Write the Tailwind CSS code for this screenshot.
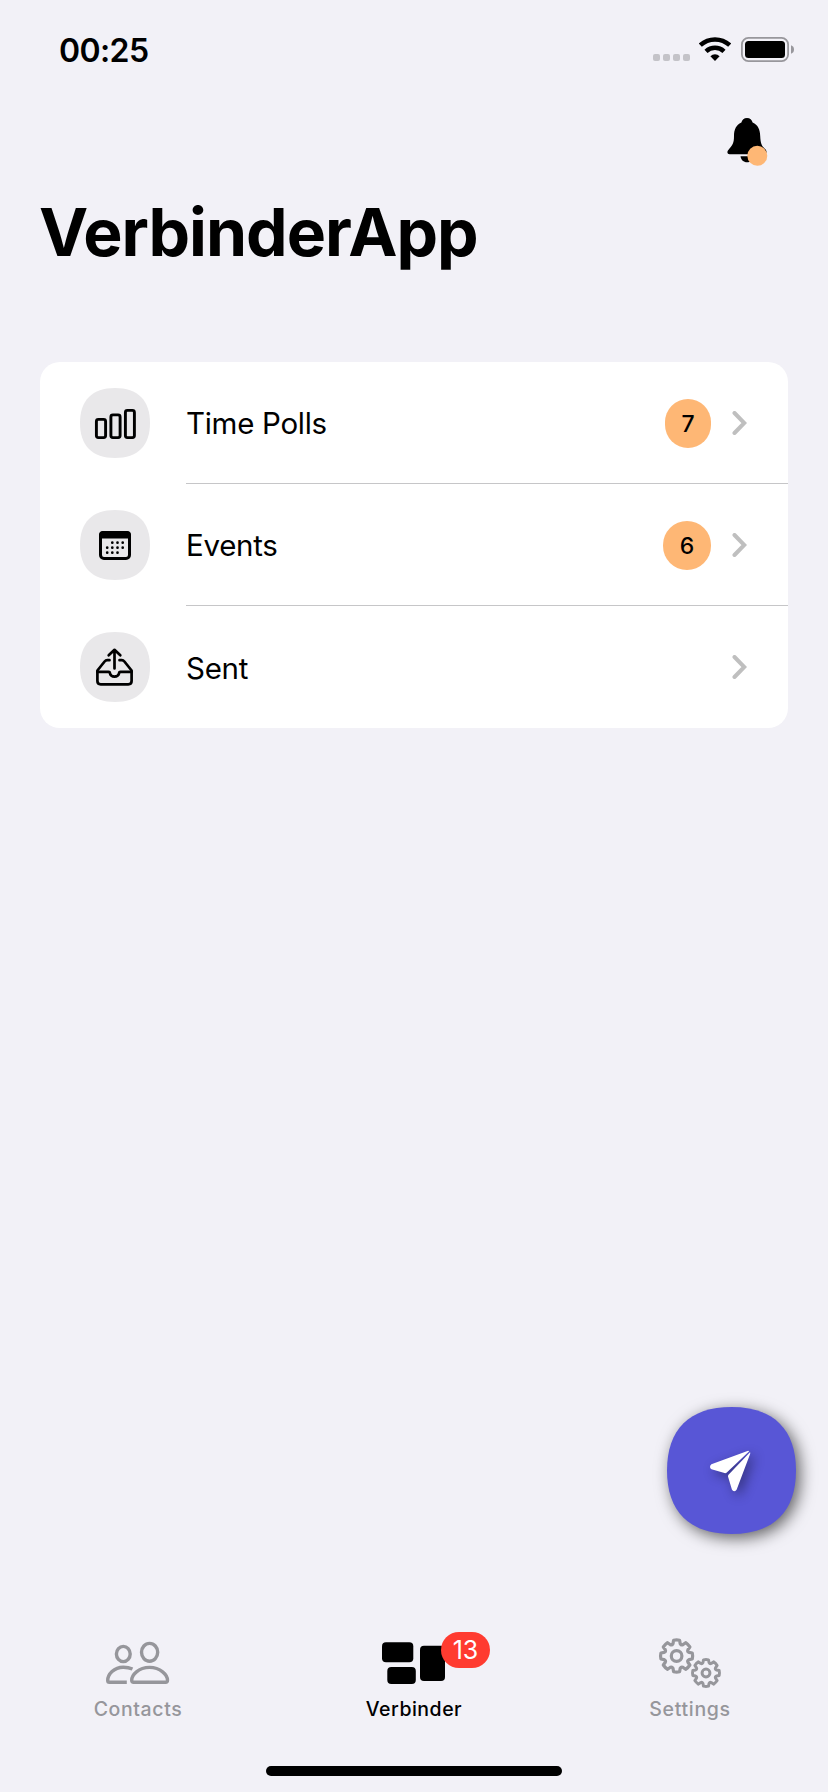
<!DOCTYPE html>
<html lang="en">
  <head>
    <meta charset="UTF-8" />
    <meta name="viewport" content="width=device-width, initial-scale=1.0" />
    <title>VerbinderApp</title>
    <script src="https://cdn.jsdelivr.net/npm/@tailwindcss/browser@4"></script>
    <style>
      body {
        font-family: "Inter", sans-serif;
      }
    </style>
  </head>
  <body class="bg-[#f2f1f7] text-black">
    <!-- Shared shapes -->
    <svg class="hidden">
      <symbol id="squircle" viewBox="0 0 100 100" preserveAspectRatio="none">
        <path d="M0 50C0 17.500 17.500 0 50 0S100 17.500 100 50 82.500 100 50 100 0 82.500 0 50Z" fill="currentColor" />
      </symbol>
      <symbol id="chevron" viewBox="0 0 14 24">
        <path d="M2 2l9.8 10L2 22" fill="none" stroke="#bfbfbf" stroke-width="4" stroke-linecap="round" stroke-linejoin="miter" />
      </symbol>
      <path
        id="gear"
        d="M-3-15.7Q0-16.4 3-15.7L3.6-12.4Q4.6-10.6 6.2-11.3L9-13.3Q11.6-11.6 13.3-9L11.3-6.2Q10.6-4.6 12.4-3.6L15.7-3Q16.4 0 15.7 3L12.4 3.6Q10.6 4.6 11.3 6.2L13.3 9Q11.6 11.6 9 13.3L6.2 11.3Q4.6 10.6 3.6 12.4L3 15.7Q0 16.4-3 15.7L-3.6 12.4Q-4.6 10.6-6.2 11.3L-9 13.3Q-11.6 11.6-13.3 9L-11.3 6.2Q-10.6 4.6-12.4 3.6L-15.7 3Q-16.4 0-15.7-3L-12.4-3.6Q-10.6-4.6-11.3-6.2L-13.3-9Q-11.6-11.6-9-13.3L-6.2-11.3Q-4.6-10.6-3.6-12.4Z"
      />
    </svg>

    <div class="relative flex h-[1792px] w-[828px] flex-col overflow-hidden">
      <!-- Status bar -->
      <header class="flex h-[98px] items-center justify-between pr-[34px] pl-[59px]">
        <span class="mt-[3px] text-[32px] leading-none font-semibold tracking-[-0.6px]">00:25</span>
        <div class="flex items-center">
          <div class="mt-[17px] mr-[9px] flex gap-[3px]">
            <i class="size-[7px] rounded-[2px] bg-[#c4c3c8]"></i>
            <i class="size-[7px] rounded-[2px] bg-[#c4c3c8]"></i>
            <i class="size-[7px] rounded-[2px] bg-[#c4c3c8]"></i>
            <i class="size-[7px] rounded-[2px] bg-[#c4c3c8]"></i>
          </div>
          <svg class="mr-[10px] h-[24px] w-[32px]" viewBox="0 0 32 24" fill="none" stroke="#000" stroke-width="4.5">
            <path d="M1.3 8.2A21.6 21.6 0 0 1 30.7 8.2" />
            <path d="M7 14.35A13.2 13.2 0 0 1 25 14.35" />
            <path d="M16 24L11.4 19.2A6.7 6.7 0 0 1 20.6 19.2Z" fill="#000" stroke="none" />
          </svg>
          <svg class="h-[25px] w-[53px]" viewBox="0 0 53 25">
            <rect x=".9" y=".9" width="46.2" height="23.2" rx="6.5" fill="none" stroke="#98979c" stroke-width="1.8" />
            <rect x="4" y="4" width="40" height="17" rx="3.5" />
            <path d="M50 8.3Q53 9.3 53 12.5T50 16.7Z" fill="#98979c" />
          </svg>
        </div>
      </header>

      <!-- Notifications -->
      <div class="flex h-[86px] justify-end pt-[20px] pr-[60px]">
        <svg class="h-[49px] w-[41px]" viewBox="0 0 41 49">
          <path d="M20 0C17 0 15 2 14.4 4.6 9 7 7 12 7 18C7 25 5.600 27 2.500 30.400Q.4 32.500.4 34.400Q.4 36.200 2.600 36.200H37Q39.600 36.200 39.600 34Q39.600 32 37.300 30.200C34.500 27.500 33.500 25 33.200 18C33 11.500 31 7 25.600 4.600 25 2 23 0 20 0Z" />
          <path d="M13.500 38.300H27C27 42 23.500 44.300 20 44.300S14 42 13.500 38.300Z" />
          <circle cx="30.300" cy="37.800" r="10" fill="#feb775" />
        </svg>
      </div>

      <h1 class="mb-[88px] h-[90px] pl-[39px] text-[66px] leading-[96px] font-bold tracking-[-1px]">VerbinderApp</h1>

      <!-- Menu -->
      <ul class="mx-10 rounded-[20px] bg-white">
        <li class="flex h-[122px] items-center pl-10">
          <div class="relative flex size-[70px] items-center justify-center">
            <svg class="absolute inset-0 size-full text-[#e9e8ea]"><use href="#squircle" /></svg>
            <svg class="relative size-[44px]" viewBox="0 0 44 44" fill="none" stroke="#000" stroke-width="2.900">
              <rect x="3.400" y="18.400" width="9.200" height="18.200" rx="2" />
              <rect x="17.900" y="13.900" width="9.200" height="22.700" rx="2" />
              <rect x="32.400" y="9.400" width="9" height="27.200" rx="2" />
            </svg>
          </div>
          <div class="ml-9 flex h-full grow items-center border-b border-[#c6c6c8] pr-[41px]">
            <span class="grow pt-[2px] text-[29.5px] tracking-[-0.3px]">Time Polls</span>
            <span class="mt-[2px] mr-[21px] flex h-[49px] w-[46px] items-center justify-center rounded-full bg-[#feb775] pt-px text-[23px] font-medium">7</span>
            <svg class="h-[24px] w-[15px]"><use href="#chevron" /></svg>
          </div>
        </li>
        <li class="flex h-[122px] items-center pl-10">
          <div class="relative flex size-[70px] items-center justify-center">
            <svg class="absolute inset-0 size-full text-[#e9e8ea]"><use href="#squircle" /></svg>
            <svg class="relative size-[44px]" viewBox="0 0 44 44">
              <rect x="7.500" y="9.500" width="29" height="26" rx="3.500" fill="none" stroke="#000" stroke-width="3" />
              <path d="M6 15.500V12Q6 8 10 8H34Q38 8 38 12V15.500Z" />
              <path
                d="M19.300 19.700h.01M24.500 19.700h.01M29.700 19.700h.01M14.200 24.700h.01M19.300 24.700h.01M24.500 24.700h.01M29.700 24.700h.01M14.200 29.700h.01M19.300 29.700h.01M24.500 29.700h.01"
                stroke="#000"
                stroke-width="2.700"
                stroke-linecap="round"
              />
            </svg>
          </div>
          <div class="ml-9 flex h-full grow items-center border-b border-[#c6c6c8] pr-[41px]">
            <span class="grow pt-[2px] text-[29.5px] tracking-[-0.3px]">Events</span>
            <span class="mt-[2px] mr-[21px] flex h-[49px] w-[48px] items-center justify-center rounded-full bg-[#feb775] pt-px text-[23px] font-medium">6</span>
            <svg class="h-[24px] w-[15px]"><use href="#chevron" /></svg>
          </div>
        </li>
        <li class="flex h-[122px] items-center pl-10">
          <div class="relative flex size-[70px] items-center justify-center">
            <svg class="absolute inset-0 size-full text-[#e9e8ea]"><use href="#squircle" /></svg>
            <svg
              class="relative size-[44px]"
              viewBox="0 0 44 44"
              fill="none"
              stroke="#000"
              stroke-width="2.700"
              stroke-linecap="round"
              stroke-linejoin="round"
            >
              <path d="M21.500 23.500V5M15.700 10.300L21.500 4.800 27.300 10.300" />
              <path d="M16.500 15.200H14.200Q12.700 15.200 11.600 16.500L4.400 25.500V36Q4.400 39.300 7.700 39.300H35.300Q38.600 39.300 38.600 36V25.500L31.400 16.500Q30.300 15.200 28.800 15.200H26.500" />
              <path d="M4.400 26.800H15.500Q16.900 26.800 16.900 28.300Q17.700 31.700 21.500 31.700T26.100 28.300Q26.100 26.800 27.500 26.800H38.600" />
            </svg>
          </div>
          <div class="ml-9 flex h-full grow items-center pr-[41px]">
            <span class="grow pt-[2px] text-[29.5px] tracking-[-0.3px]">Sent</span>
            <svg class="h-[24px] w-[15px]"><use href="#chevron" /></svg>
          </div>
        </li>
      </ul>

      <!-- Floating send button -->
      <button class="absolute top-[1407px] left-[667px] h-[127px] w-[129px]">
        <svg class="absolute inset-0 size-full text-[#5856d6] drop-shadow-[4px_4px_8px_rgba(0,0,0,0.6)]"><use href="#squircle" /></svg>
        <svg class="absolute top-[43px] left-[42px] h-[42px] w-[42px] overflow-visible drop-shadow-[4px_4px_6px_rgba(0,0,0,0.4)]" viewBox="0 0 42 42" fill="#fff">
          <path d="M2.400 14.300L38.500.9Q39.600.6 40.200 1.200L17.500 22.800Q16.600 23.500 15.500 23.100L2.500 19.300Q1 18.600 1 17T2.400 14.300Z" />
          <path d="M41 2.200Q41.600 2.900 41 4.300L27.700 39.400Q26.900 41.200 25.300 41.200T22.900 39.600L19 26.600Q18.800 25.500 19.500 24.700Z" />
        </svg>
      </button>

      <!-- Tab bar -->
      <nav class="mt-auto mb-[66px] grid h-[100px] grid-cols-3 text-[19.5px] font-medium text-[#96969b]">
        <a class="flex flex-col items-center">
          <svg class="mt-2 h-[58px] w-[80px]" viewBox="98 1634 80 58" fill="none" stroke="#96969b" stroke-width="3.400" stroke-linejoin="round">
            <ellipse cx="123.300" cy="1654" rx="6.900" ry="7.600" />
            <ellipse cx="149.600" cy="1652.300" rx="8.100" ry="8.900" />
            <path d="M132.500 1669Q128.500 1667.200 123.300 1667.200C114 1667.200 107.700 1674.500 107.700 1680.500Q107.700 1682.300 109.500 1682.300H126.800" />
            <path d="M149.500 1667.400C138.500 1667.400 131.700 1675 131.700 1680.300Q131.700 1682.300 133.700 1682.300H165.500Q167.500 1682.300 167.500 1680.300C167.500 1675 160.500 1667.400 149.500 1667.400Z" />
          </svg>
          <span class="mt-[3px] tracking-[0.6px]">Contacts</span>
        </a>
        <a class="relative flex flex-col items-center text-black">
          <svg class="mt-2 h-[58px] w-[80px]" viewBox="374 1634 80 58">
            <rect x="382" y="1642.300" width="31.300" height="20" rx="4" />
            <rect x="387.300" y="1667" width="28.500" height="17" rx="4" />
            <rect x="420" y="1645.700" width="25" height="35.200" rx="4" />
          </svg>
          <span class="mt-[3px] tracking-[0.5px]">Verbinder</span>
          <b class="absolute top-[6px] left-[165px] flex h-[36px] w-[49px] items-center justify-center rounded-full bg-[#ff3b30] pt-px text-[25px] font-normal text-white">13</b>
        </a>
        <a class="flex flex-col items-center">
          <svg class="mt-2 h-[58px] w-[80px]" viewBox="649 1634 80 58" fill="none" stroke="#96969b" stroke-linejoin="round">
            <g transform="translate(675.600 1656)" stroke-width="3.200">
              <use href="#gear" />
              <circle r="5.300" />
            </g>
            <g transform="translate(705 1673) scale(.84)" stroke-width="3.500">
              <use href="#gear" />
              <circle r="4.700" />
            </g>
          </svg>
          <span class="mt-[3px] tracking-[0.7px]">Settings</span>
        </a>
      </nav>
      <div class="absolute bottom-4 left-[266px] h-[10px] w-[296px] rounded-full bg-black"></div>
    </div>
  </body>
</html>
